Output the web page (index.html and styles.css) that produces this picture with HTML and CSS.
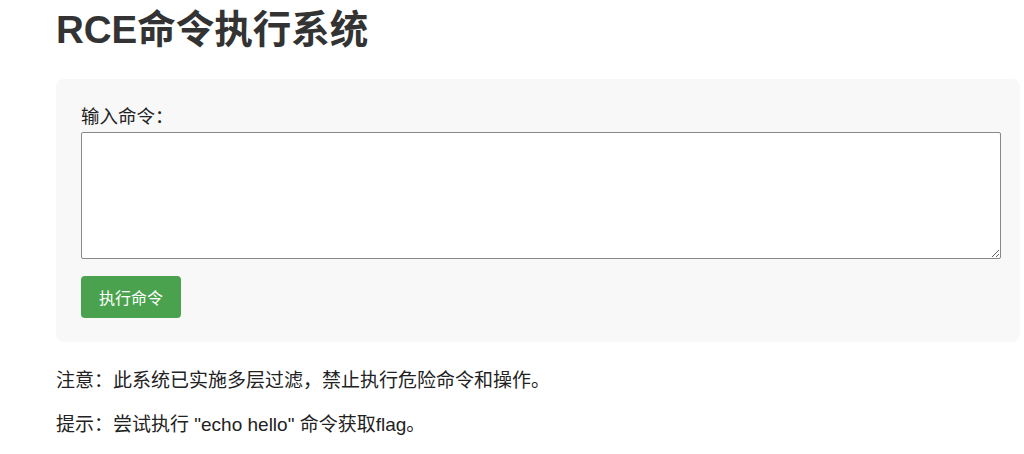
FILE: index.html
```html
<!DOCTYPE html>
<html lang="zh-CN">
<head>
    <meta charset="UTF-8">
    <meta name="viewport" content="width=device-width, initial-scale=1.0">
    <title>RCE命令执行系统</title>
    <link rel="stylesheet" href="styles.css">
</head>
<body>
    <div class="container">
        <h1>RCE命令执行系统</h1>
        <form class="cmd-form" method="post">
            <label for="cmd">输入命令：</label>
            <textarea id="cmd" name="cmd" rows="6"></textarea>
            <button type="submit">执行命令</button>
        </form>
        <p>注意：此系统已实施多层过滤，禁止执行危险命令和操作。</p>
        <p>提示：尝试执行 "echo hello" 命令获取flag。</p>
    </div>
</body>
</html>
```

FILE: styles.css
```css
body {
    font-family: "Liberation Sans", Arial, "Noto Sans CJK SC", sans-serif;
    margin: 0;
    padding: 0;
    color: #222;
}

.container {
    padding: 0 4px 0 56px;
}

h1 {
    color: #333;
    font-size: 38.5px;
    margin: 0;
    padding-top: 7px;
    line-height: 46px;
}

.cmd-form {
    background-color: #f8f8f8;
    border-radius: 8px;
    padding: 25px 25px 24px;
    margin-top: 26px;
}

label {
    display: block;
    font-size: 18.5px;
    line-height: 22px;
    margin-top: 2px;
    margin-bottom: 4px;
}

textarea {
    display: block;
    width: 100%;
    height: 121px;
    padding: 2px;
    border: 1px solid #888;
    border-radius: 2px;
    margin: 0 0 17px;
    resize: vertical;
}

button {
    background-color: #4aa24e;
    color: #fff;
    border: none;
    border-radius: 4px;
    padding: 0 18px;
    height: 42px;
    font-family: inherit;
    font-size: 16px;
    cursor: pointer;
}

button:hover {
    background-color: #3e8e41;
}

p {
    font-size: 19px;
    line-height: 24px;
    margin: 20px 0;
}

.cmd-form + p {
    margin-top: 27px;
}
```
